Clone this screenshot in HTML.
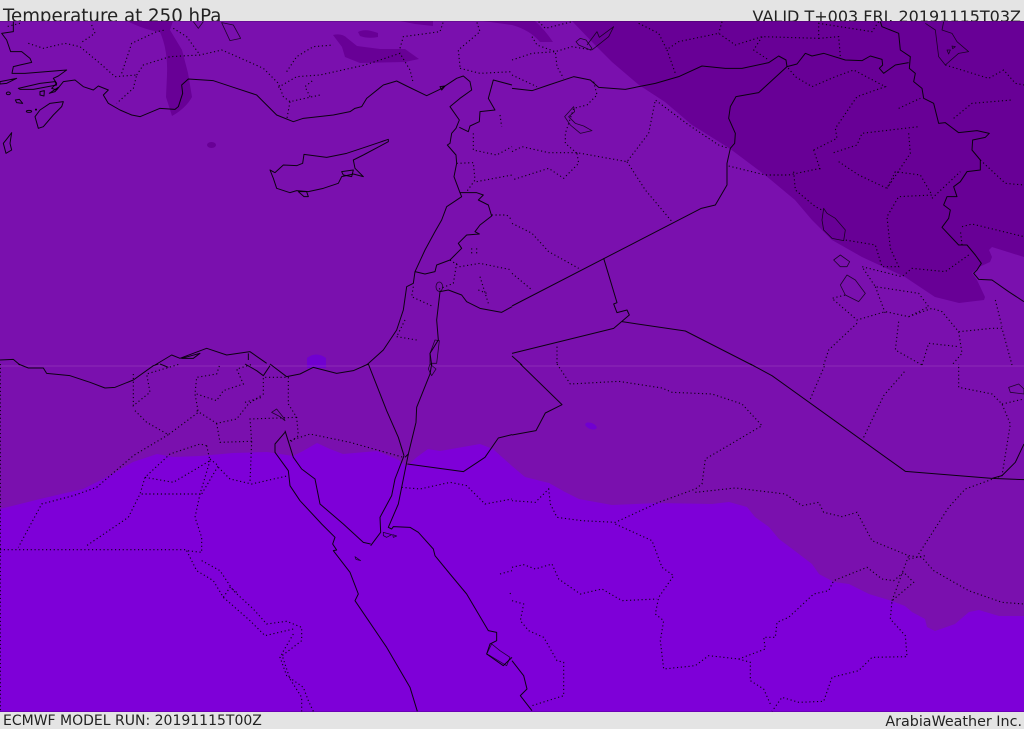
<!DOCTYPE html>
<html><head><meta charset="utf-8"><title>Temperature at 250 hPa</title>
<style>
html,body{margin:0;padding:0;background:#e4e4e4;width:1024px;height:729px;overflow:hidden}
svg{position:absolute;left:0;top:0;display:block}
text{font-family:"DejaVu Sans","Liberation Sans",sans-serif;fill:#222}
.s{fill:none;stroke:#000;stroke-width:3;stroke-opacity:.9;stroke-linejoin:round}
.t{fill:none;stroke:#000;stroke-width:2.4;stroke-opacity:.75;stroke-linejoin:round}
.d{fill:none;stroke:#000;stroke-width:3.4;stroke-opacity:.9;stroke-dasharray:3.5 8}
</style></head><body>
<svg width="1024" height="729" viewBox="0 0 1024 729" xmlns="http://www.w3.org/2000/svg">
<defs><clipPath id="m"><rect x="0" y="21" width="1024" height="691"/></clipPath></defs>
<rect width="1024" height="729" fill="#e4e4e4"/>
<text x="3" y="22" font-size="18.2">Temperature at 250 hPa</text>
<text x="1021" y="22" font-size="16" text-anchor="end">VALID T+003 FRI. 20191115T03Z</text>
<text x="3" y="725" font-size="14">ECMWF MODEL RUN: 20191115T00Z</text>
<text x="1022" y="726" font-size="14.3" text-anchor="end">ArabiaWeather Inc.</text>
<g clip-path="url(#m)">
<rect y="21" width="1024" height="691" fill="#7a10ae"/>
<!-- dark -->
<g fill="#680096">
<path d="M572,21 L595,45 L612,62 L639,85 L665,102 L692,125 L729,148 L765,175 L795,200 L812,220 L832,240 L862,257 L905,277 L935,297 L959,303 L984,300 L985,297 L977,280 L972,273 L979,267 L990,262 L992,257 L989,250 L992,247 L1024,257 L1024,21Z"/>
<path d="M127,21 Q145,30 160,32 Q168,50 167,75 L166,97 L172,116 Q186,108 192,97 L188,73 L182,50 L170,30 L173,21Z"/>
<path d="M333,35 Q342,33 347,38 L357,46 L380,49 L405,49 L419,59 L405,62 L360,63 L345,57 L342,47Z"/>
<path d="M358,32 Q365,28 378,33 L378,37 Q368,39 360,36Z"/>
<path d="M400,21 L433,21 L433,26 L415,24Z"/>
<path d="M483,21 L512,25 Q530,30 540,42 L553,42 Q545,30 535,21Z"/>
<ellipse cx="211.500" cy="145" rx="4.500" ry="3"/>
</g>
<!-- bright -->
<path fill="#7e00d8" d="M0,509 L40,499 L83,489 L107,477 L133,462 L157,454 L173,457 L200,456 L233,453 L267,452 L293,456 L303,451 L317,443 L330,449 L343,454 L377,451 L397,459 L407,466 L417,457 L428,449 L440,451 L480,444 L493,449 L512,466 L525,477 L549,483 L565,492 L579,499 L612,505 L659,503 L712,504 L729,502 L747,507 L755,517 L769,527 L779,539 L795,551 L812,564 L819,574 L834,582 L849,584 L869,594 L892,601 L905,606 L912,612 L925,619 L927,627 L935,631 L955,624 L969,612 L979,610 L999,616 L1024,616 L1024,712 L0,712Z"/>
<path fill="#7000d0" d="M307,358 Q316,351 326,358 L326,368 L307,368Z"/>
<ellipse cx="591" cy="426" rx="6" ry="3" fill="#7000d0" transform="rotate(20 591 426)"/>
<rect y="365.500" width="1024" height="1" fill="#9a44c0" opacity=".55"/>
<rect x="0" y="21" width="1024" height="1" fill="#000" opacity=".15"/>
<rect x="0" y="711" width="1024" height="1" fill="#000" opacity=".15"/>

<!-- Q1 -->
<g transform="scale(.33333)">
<path class="s" d="M40,65 L40,95 L5,100 L20,120 L32,155 L65,155 L90,175 L95,187 L60,195 L40,200 L36,220 L75,220 L200,210 L175,228 L160,235 L170,250 L155,265 L170,270 L190,245 L225,240 L250,260 L280,270 L295,258 L325,270 L310,285 L325,310 L360,330 L395,345 L420,350 L480,325 L525,328 L535,320 L548,280 L545,255 L565,237 L640,242 L700,262 L770,285 L800,315 L830,345 L880,365 L910,355 L1000,345 L1050,335 L1065,325 L1085,320 L1100,295 L1150,255 L1190,243 L1220,258 L1280,287 L1320,268 L1370,235 L1390,228 L1410,245 L1415,270 L1380,295 L1350,320 L1378,360 L1368,385 L1355,400 L1350,430 L1342,435 L1368,465 L1370,490 L1362,530 L1380,578 L1385,590 L1340,620 L1325,660 L1305,695 L1275,750 L1245,815 L1240,850 L1220,860 L1210,930 L1190,990 L1150,1050 L1100,1095"/>
<path class="s" d="M1378,382 L1405,395 L1410,378 L1438,365 L1440,335 L1485,330 L1465,295 L1480,240 L1536,255"/>
<path class="s" d="M1380,578 L1430,578 L1450,585 L1435,600 L1465,615 L1475,648 L1440,675 L1425,695 L1438,702 L1400,705 L1375,730 L1385,745 L1370,760 L1350,780 L1310,795 L1305,815 L1275,822 L1245,815"/>
<path class="s" d="M1536,920 L1505,937 L1440,925 L1400,905 L1385,885 L1345,870 L1320,875 L1310,960 L1315,1020 L1290,1060 L1295,1095"/>
<path class="t" d="M1305,1020 L1318,1022 L1310,1090 L1290,1090 L1290,1060Z"/>
<ellipse class="t" cx="1318" cy="860" rx="10" ry="14"/>
<path class="s" d="M810,510 L825,518 L850,495 L890,497 L908,490 L912,463 L980,472 L1040,460 L1100,440 L1165,418 L1165,425 L1090,465 L1060,480 L1065,505 L1090,530 L1060,522 L1025,530 L1015,550 L970,565 L925,575 L890,572 L870,578 L830,565 L820,535Z"/>
<path class="s" d="M1025,515 L1060,510 L1055,530 L1030,525Z M895,575 L920,575 L925,590 L912,590Z"/>
<path class="s" d="M1320,260 L1335,258 L1325,270Z"/>
<path class="s" d="M190,305 L150,310 L120,330 L105,350 L115,385 L130,380 L160,345 L185,320Z"/>
<path class="s" d="M35,398 L22,415 L10,430 L18,460 L35,450 L30,430Z"/>
<path class="s" d="M55,265 L120,250 L165,245 L170,255 L100,268 L60,268Z M0,245 L50,235 L20,250 L0,252Z M148,280 L175,262 L165,275Z"/>
<path class="s" d="M120,275 L133,272 L132,288 L120,285Z"/>
<ellipse class="s" cx="25" cy="280" rx="6" ry="4"/><ellipse class="s" cx="87" cy="334" rx="8" ry="3"/><circle cx="108" cy="329" r="3"/>
<path class="s" d="M46,300 L58,298 L68,310 L50,308Z"/>
<path class="s" d="M0,1080 L40,1078 L60,1095 M465,1095 L515,1065 L540,1075 L620,1045 L680,1065 L750,1055 L800,1090"/>
<path class="s" d="M545,1075 L600,1060 L580,1075Z M745,1060 L745,1080"/>
<path class="t" d="M665,68 L700,75 L722,115 L690,122Z M580,65 L595,85 L610,65"/>
<g>
<path class="d" d="M85,130 L130,145 L195,130 L240,140 L300,190 L345,230 L410,225 L400,265 L350,310"/>
<path class="d" d="M60,70 L20,80 M275,75 L285,100 L240,130 M365,220 L395,130 L470,95 L495,90"/>
<path class="d" d="M410,225 L430,195 L510,170 L600,165 L665,150 L700,165 L790,205 L835,250 L850,290 L870,305 L960,285"/>
<path class="d" d="M520,85 L560,110 L600,165 M835,262 L890,230 L960,225 L1095,195 L1200,160 L1230,210 L1240,250"/>
<path class="d" d="M860,215 L890,170 L940,140 L1000,135 M870,305 L860,360 M930,290 L915,260 L940,240"/>
<path class="d" d="M1200,145 L1210,110 L1320,95 L1330,65 M1380,200 L1375,150 L1440,95 L1430,65 M1380,205 L1440,220 L1536,215"/>
<path class="d" d="M1420,400 L1420,450 L1490,465 L1536,440 M1370,490 L1420,488 L1425,540 L1400,575 M1430,545 L1536,525"/>
<path class="d" d="M1475,645 L1520,645 L1536,660 M1350,780 L1380,800 L1440,790 L1536,810 M1370,790 L1360,850 L1310,870"/>
<path class="d" d="M1240,860 L1235,890 L1300,920 M1190,1010 L1250,1020 M1215,960 L1190,1010 M1440,830 L1465,910 M1435,870 L1460,880 M1500,345 L1505,380 M1415,745 L1415,760 M1430,745 L1430,760"/>
</g>
</g>

<!-- Q2 -->
<g transform="translate(512,0) scale(.33333)">
<path class="s" d="M0,265 L60,272 L110,255 L185,230 L235,240 L260,262 L340,268 L430,250 L500,230 L570,198 L640,205 L690,205 L770,188 L800,168 L822,180 L825,200 L855,192 L880,160 L900,168 L935,160 L1000,180 L1050,182 L1075,168 L1110,178 L1112,195 L1102,205 L1115,220 L1150,195 L1190,188"/>
<path class="s" d="M825,200 L740,278 L672,290 L655,320 L650,355 L670,400 L668,430 L655,445 L645,490 L645,555 L610,615 L568,625 L0,918"/>
<path class="s" d="M1105,65 L1110,80 L1160,100 L1165,150 L1195,170 L1192,205 L1210,220 L1205,245 L1230,265 L1235,295 L1265,310 L1280,370 L1300,368 L1340,398 L1395,392 L1432,400 L1420,412 L1382,420 L1380,450 L1405,480 L1405,510 L1365,515 L1345,545 L1325,560 L1335,590 L1305,590 L1295,615 L1315,630 L1310,655 L1290,682 L1340,735 L1365,735 L1390,765 L1408,790 L1395,810 L1385,820 L1400,838 L1440,840 L1490,875 L1536,905"/>
<path class="t" d="M1240,70 L1270,90 L1280,170 L1300,195 L1340,160 L1370,155 L1335,125 L1320,100 L1290,90 L1295,65"/>
<path class="t" d="M1305,150 L1315,150 L1310,162Z M1320,138 L1330,140 L1322,146Z"/>
<path class="s" d="M275,775 L315,908 L305,912 L315,938 L345,930 L352,945 L305,985 L0,1060"/>
<path class="s" d="M330,965 L520,993 L720,1095 M0,1068 L30,1095"/>
<path class="t" d="M935,625 L930,660 L935,690 L960,715 L995,722 L1000,690 L970,655 L945,640Z"/>
<path class="t" d="M965,780 L985,765 L1013,785 L1005,800 L985,800Z M1005,825 L985,855 L1000,885 L1040,905 L1060,880 L1030,840Z"/>
<path class="t" d="M192,125 L205,115 L222,120 L240,145 L235,150 L200,135Z M225,135 L255,95 L262,112 L305,80 L290,110 L240,150"/>
<path class="t" d="M185,320 L158,350 L175,375 L205,400 L240,392 L215,378 L190,370 L170,350 L188,335Z"/>
<path class="d" d="M0,180 L60,160 L130,155 L180,140 L240,150 M60,110 L75,135 L130,155 L135,200 L155,235"/>
<path class="d" d="M0,225 L75,260 M245,245 L255,285 L225,315 L185,325 L160,400 L160,430 L195,460"/>
<path class="d" d="M0,455 L30,440 L110,458 L195,458 L345,485 L410,400 L430,300 L530,375 L620,435 L650,445"/>
<path class="d" d="M345,485 L400,570 L480,665 M195,460 L200,490 L155,535 L110,505 L0,540 M0,670 L60,700 L110,755 L200,805 M0,820 L60,870"/>
<path class="d" d="M650,498 L760,525 L830,525 L925,505 M845,515 L850,570 L910,620 L930,630"/>
<path class="d" d="M905,450 L975,415 L970,385 L1035,290 L1120,260 L1025,210 L970,230 L900,260 L850,230 L825,200 M905,450 L925,510"/>
<path class="d" d="M965,458 L1035,435 L1050,400 L1220,380 M980,485 L1040,525 L1125,565 L1150,515 L1225,525 L1260,585 L1160,590 L1125,650 L1135,745 L1160,800 L1110,800 L1090,735 L1000,720"/>
<path class="d" d="M1190,400 L1195,460 L1125,565 M1160,325 L1225,295 M1325,355 L1380,310 L1500,300 M1405,480 L1480,550 L1536,555"/>
<path class="d" d="M1300,195 L1430,235 L1475,210 L1510,250 L1536,255 M1350,680 L1380,672 L1536,710 M1350,735 L1345,690 M1260,595 L1345,515"/>
<path class="d" d="M1370,765 L1300,815 L1200,805 L1170,830 L1050,800 L1090,860 L1220,880 L1250,920 L1190,950 L1120,935 L1035,960 L960,895 L1000,885 M1090,860 L1120,940"/>
<path class="d" d="M1035,970 L950,1050 L935,1095 M1160,965 L1150,1050 L1230,1095 M1190,950 L1260,925 L1290,935 L1340,995 L1350,1060 L1320,1095 M1230,1095 L1250,1030 L1340,1040 M1340,995 L1440,985 L1470,985 L1500,1095 M1450,900 L1470,980"/>
<path class="d" d="M470,145 L500,125 L620,100 L670,135 L750,110 L920,115 L920,70 L1080,95 L1100,65 M465,150 L490,220 M630,65 L620,100 M920,115 L980,110 L985,170 M380,70 L440,100 L465,150 M750,110 L725,150 L770,180 M135,1040 L135,1095 M80,65 L100,85 L180,65"/>
</g>

<!-- Q3 -->
<g transform="translate(0,364) scale(.33333)">
<path class="s" d="M55,0 L85,12 L130,12 L140,28 L210,35 L270,55 L315,72 L345,70 L400,48 L460,5 L475,0 M480,0 L505,10 M735,0 L770,20 L790,35 L810,5 M810,0 L860,38 L900,30 L940,10 L1010,28 L1060,20 L1105,0"/>
<path class="s" d="M1105,0 L1160,140 L1195,220 L1212,275"/>
<path class="s" d="M1295,0 L1290,30 L1250,130 L1248,175 L1225,270 L1215,280"/>
<path class="t" d="M1290,0 L1308,15 L1295,35 L1285,15Z"/>
<path class="s" d="M1212,275 L1185,345 L1175,395 L1140,460 L1142,505 L1112,545 M1225,270 L1215,320 L1195,420 L1165,490 L1175,495 L1180,488 L1230,490 L1255,505 L1300,555 L1305,575 L1350,630 L1400,690 L1465,800 L1490,805 L1490,830 L1470,840 L1460,870 L1510,905 L1536,880"/>
<path class="t" d="M1150,505 L1175,512 L1160,520 L1150,515Z M1178,512 L1190,516 L1180,520Z M1065,578 L1082,590 L1068,586Z"/>
<path class="s" d="M855,200 L880,280 L905,315 L945,345 L960,420 L1030,480 L1090,535 L1112,540 M855,205 L825,240 L825,265 L865,320 L870,365 L900,410 L965,480 L1005,520 L998,540 L1010,558 L1000,560 L1050,625 L1075,690 L1065,710 L1160,850 L1230,970 L1252,1042"/>
<path class="t" d="M815,145 L830,135 L850,160 L855,170 L840,158Z"/>
<path class="s" d="M1222,300 L1390,323 L1455,280 L1495,222 L1536,212"/>
<path class="t" d="M1460,870 L1475,840 L1500,860 L1530,880 L1520,905 L1470,875Z"/>
<path class="d" d="M400,30 L400,125 L450,85 L440,30 L540,0 M405,140 L440,175 L505,212 L595,145 L585,90 L590,40 L650,30 L660,0"/>
<path class="d" d="M505,212 L400,275 L290,370 L220,395 L125,420 L55,550"/>
<path class="d" d="M590,90 L650,110 L670,80 L730,60 L710,15 L760,0 M590,140 L650,178 L710,165 L745,120 L790,90 L790,40 L865,40 L865,120 L890,160 L895,215 L870,235"/>
<path class="d" d="M650,178 L660,235 L755,232 L750,165 L890,160 M735,115 L785,100 M755,232 L750,355 M870,230 L930,210 L1050,235 L1210,280"/>
<path class="d" d="M620,245 L600,240 L510,270 L435,340 L420,390 L385,460 L260,545 M620,245 L630,290 L600,390 L585,460 L605,520 L605,565 L560,560"/>
<path class="d" d="M630,285 L655,305 L605,390 M655,310 L690,345 L755,360 L865,335 M435,340 L520,355 L630,290 M425,390 L605,390 M0,557 L560,557"/>
<path class="d" d="M560,560 L590,620 L640,650 L670,700 L750,770 L795,815 L880,795 M605,590 L660,620 L700,680 L760,735 L800,780 L860,772 L905,790 L905,830 L840,880 L860,935 L910,970 L925,1010 L940,1042 M880,810 L845,870 L870,945 L905,1000 L905,1042 M670,700 L690,670 L710,685"/>
<path class="d" d="M1205,370 L1260,375 L1350,355 L1400,365 L1455,420 L1536,405 M1500,630 L1536,620 M1530,690 L1536,680"/>
<path class="d" d="M1,0 L1,1042"/>
</g>

<!-- Q4 -->
<g transform="translate(512,364) scale(.33333)">
<path class="s" d="M0,213 L72,200 L100,147 L150,122 L25,0"/>
<path class="s" d="M715,0 L780,35 L1180,322 L1440,343 L1536,347 M1440,343 L1470,335 L1510,295 L1536,240"/>
<path class="s" d="M0,890 L35,935 L45,975 L25,995 L60,1040"/>
<path class="t" d="M1490,70 L1520,60 L1536,75 L1536,90 L1495,85Z"/>
<path class="d" d="M135,0 L175,60 L320,52 L450,72 L480,85 L600,90 L690,120 L750,185 L580,285 L570,360 L550,375 L440,415 L310,475 L210,470 L135,460 L115,420 L110,375 L70,415 L0,410"/>
<path class="d" d="M550,385 L670,372 L820,390 L870,425 L920,415 L935,445 L990,458 L1035,445 L1080,530 L1190,575 L1230,580 L1265,620 L1370,680 L1470,715 L1536,720"/>
<path class="d" d="M310,480 L420,530 L450,610 L485,635 L440,700 L430,750 L455,770 L445,830 L455,915 L550,905 L590,875 L680,885 L760,855 L755,820 L790,820 L795,775 L830,760 L905,690 L950,680 L965,650 L1065,610 L1110,645 L1145,650 L1175,625 L1205,655 L1140,710 L1135,765 L1180,815 L1185,878 L1080,880 L1040,920 L960,940 L935,1012 L860,1015 L810,1000 L780,1042"/>
<path class="d" d="M0,610 L35,602 L70,615 L120,600 L140,645 L205,690 L270,675 L330,710 L435,705 M680,885 L715,895 L715,950 L755,975 L775,1020"/>
<path class="d" d="M0,710 L35,720 L25,770 L50,800 L95,820 L135,890 L155,895 L155,995 L60,1025"/>
<path class="d" d="M1140,710 L1190,575 M1190,585 L1240,575 M1220,570 L1310,430 L1360,375 L1470,335 L1495,180 L1470,120 L1440,90 L1340,70 L1340,0 M1470,120 L1536,105"/>
<path class="d" d="M895,105 L940,0 M1055,220 L1115,95 L1180,20"/>
</g>
</g>
</svg>
</body></html>
